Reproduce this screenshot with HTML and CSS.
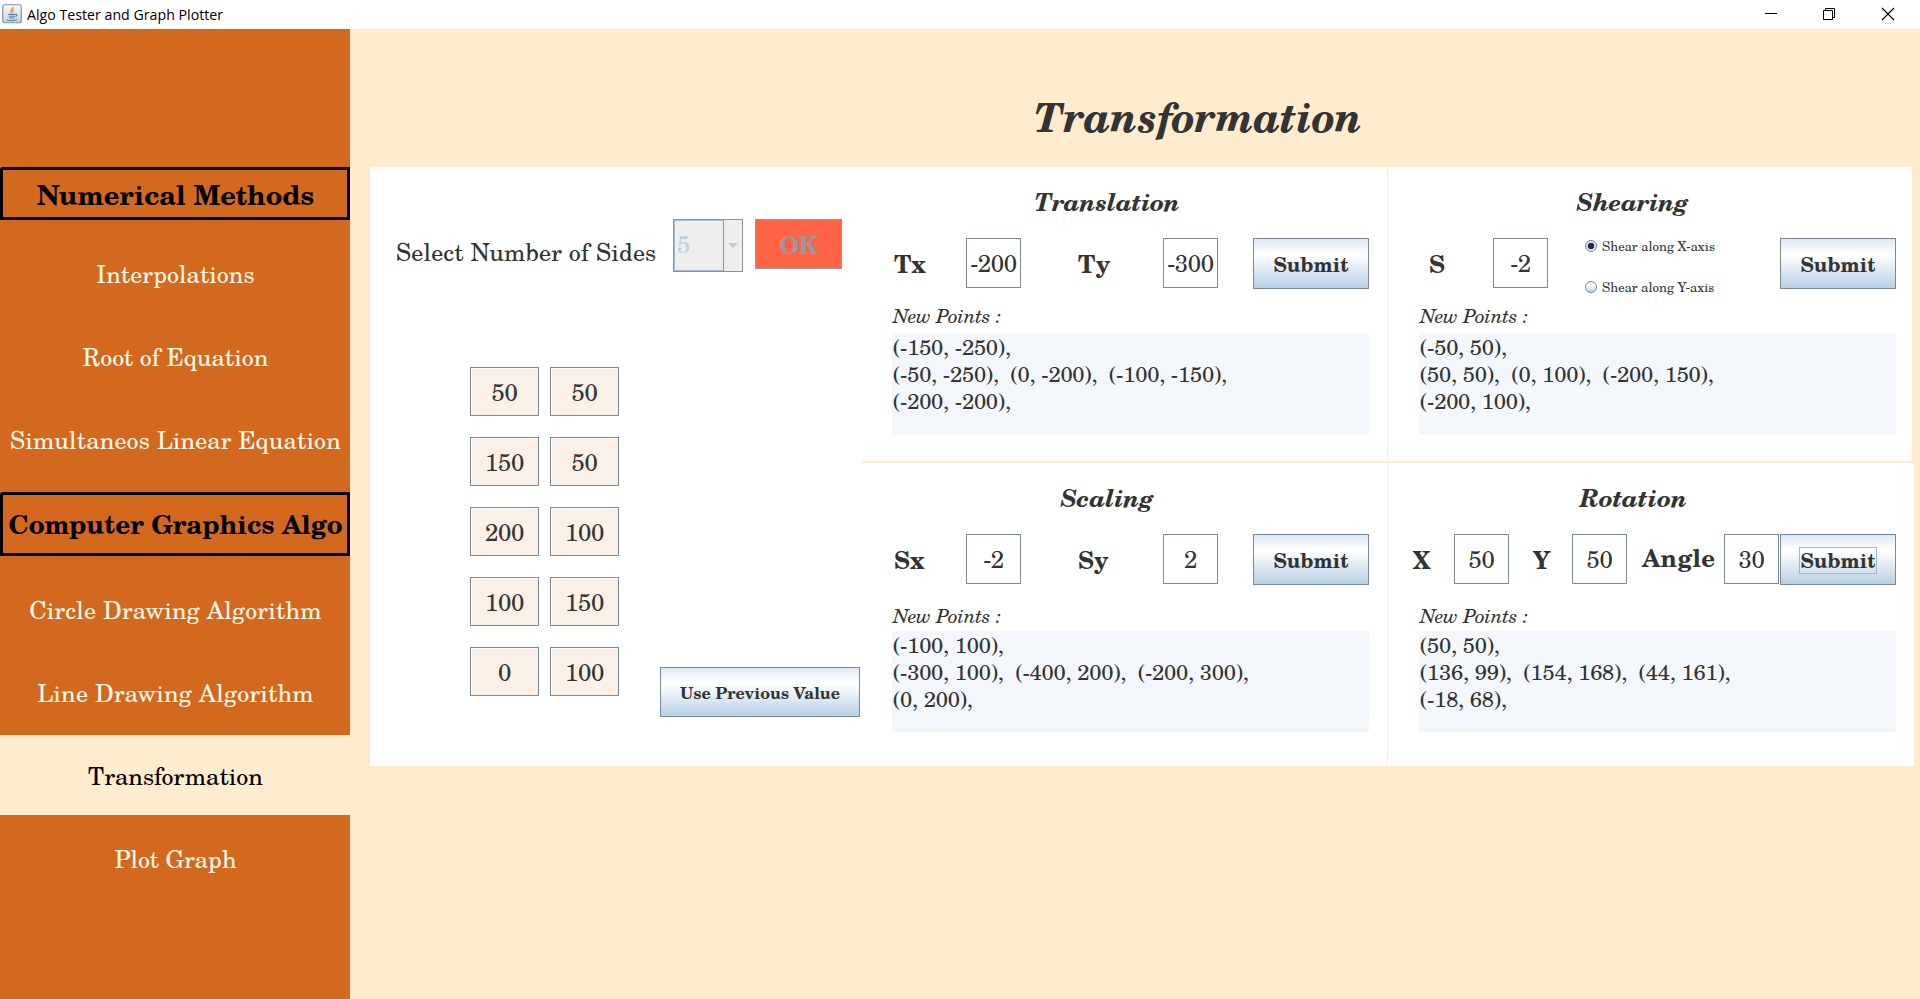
FILE: index.html
```html
<!DOCTYPE html>
<html lang="en">
<head>
<meta charset="utf-8">
<title>Algo Tester and Graph Plotter</title>
<link rel="stylesheet" href="styles.css">
</head>
<body>
<header class="titlebar">
  <svg class="app-icon" width="20" height="20" viewBox="0 0 20 20">
    <defs><linearGradient id="tile" x1="0" y1="0" x2="0" y2="1"><stop offset="0" stop-color="#fafbfc"/><stop offset="1" stop-color="#c3d3e0"/></linearGradient></defs>
    <rect x=".75" y=".75" width="18.5" height="18" rx="2" fill="url(#tile)" stroke="#7f93a3" stroke-width="1.2"/>
    <path d="M10.6 3c1.2 1.900-2.600 2.900-1.700 4.600.3.600.8.900.9 1.600M12.400 5.600c-1.500.7-2 1.300-1.200 2.500" fill="none" stroke="#e08a3c" stroke-width="1.300"/>
    <path d="M6.300 10.400h6.800M6.800 12.300h6M7.300 14h5M4.800 15.900c2 .9 8.400.9 10.400-.3M13.200 10.300c2.200-.5 2.300 1.600.1 2.200" fill="none" stroke="#5b80a5" stroke-width="1.100"/>
  </svg>
  <span class="app-title">Algo Tester and Graph Plotter</span>
  <svg class="win-controls" width="132" height="14" viewBox="0 0 132 14" fill="none" stroke="#000" stroke-width="1">
    <path d="M1 6.500h12M59.500 3.500h9v9h-9zM61.500 3.500v-2h9v9h-2"/>
    <path d="M118 1l12 12M130 1l-12 12" stroke-width="1.100"/>
  </svg>
</header>
<div class="window">
  <nav class="sidebar">
    <div class="group group-numerical">Numerical Methods</div>
    <a class="item">Interpolations</a>
    <a class="item">Root of Equation</a>
    <a class="item wide">Simultaneos Linear Equation</a>
    <div class="group group-graphics">Computer Graphics Algo</div>
    <a class="item wider">Circle Drawing Algorithm</a>
    <a class="item wider">Line Drawing Algorithm</a>
    <a class="item active">Transformation</a>
    <a class="item">Plot Graph</a>
  </nav>
  <main class="content">
    <h1 class="page-title">Transformation</h1>
    <div class="board">
      <section class="shape">
        <div class="sides">
          <span class="sides-label">Select Number of Sides</span>
          <div class="combo"><span class="combo-value">5</span><span class="combo-arrow"></span></div>
          <button class="ok" disabled>OK</button>
        </div>
        <div class="vertices">
          <div class="points">
            <span class="field">50</span><span class="field">50</span>
            <span class="field">150</span><span class="field">50</span>
            <span class="field">200</span><span class="field">100</span>
            <span class="field">100</span><span class="field">150</span>
            <span class="field">0</span><span class="field">100</span>
          </div>
          <button class="btn previous">Use Previous Value</button>
        </div>
      </section>
      <section class="panel translation">
        <h2>Translation</h2>
        <div class="controls">
          <span class="label first">Tx</span><span class="field">-200</span>
          <span class="label second">Ty</span><span class="field">-300</span>
          <button class="btn submit">Submit</button>
        </div>
        <div class="caption">New Points :</div>
        <pre class="result">(-150, -250),
(-50, -250),  (0, -200),  (-100, -150),
(-200, -200),</pre>
      </section>
      <section class="panel right shearing">
        <h2>Shearing</h2>
        <div class="controls">
          <span class="label shear">S</span><span class="field">-2</span>
          <div class="radios">
            <div class="radio"><i class="dot on"></i>Shear along X-axis</div>
            <div class="radio"><i class="dot"></i>Shear along Y-axis</div>
          </div>
          <button class="btn submit">Submit</button>
        </div>
        <div class="caption">New Points :</div>
        <pre class="result">(-50, 50),
(50, 50),  (0, 100),  (-200, 150),
(-200, 100),</pre>
      </section>
      <section class="panel lower scaling">
        <h2>Scaling</h2>
        <div class="controls">
          <span class="label first">Sx</span><span class="field">-2</span>
          <span class="label second">Sy</span><span class="field">2</span>
          <button class="btn submit">Submit</button>
        </div>
        <div class="caption">New Points :</div>
        <pre class="result">(-100, 100),
(-300, 100),  (-400, 200),  (-200, 300),
(0, 200),</pre>
      </section>
      <section class="panel right lower rotation">
        <h2>Rotation</h2>
        <div class="controls">
          <span class="label rx">X</span><span class="field">50</span>
          <span class="label ry">Y</span><span class="field">50</span>
          <span class="label angle">Angle</span><span class="field">30</span>
          <button class="btn submit"><span class="focus">Submit</span></button>
        </div>
        <div class="caption">New Points :</div>
        <pre class="result">(50, 50),
(136, 99),  (154, 168),  (44, 161),
(-18, 68),</pre>
      </section>
    </div>
  </main>
</div>
</body>
</html>
```
FILE: styles.css
```css
* { box-sizing: border-box; }

body {
  margin: 0;
  height: 999px;
  overflow: hidden;
  display: flex;
  flex-direction: column;
  background: #ffebcd;
  color: #333;
  font: 24px "TeX Gyre Schola", "Century Schoolbook", "Liberation Serif", serif;
  white-space: nowrap;
}

.titlebar {
  height: 29px;
  flex: none;
  display: flex;
  align-items: center;
  padding: 0 24px 0 2px;
  background: #fff;
  color: #000;
}
.app-icon { display: block; margin-top: -2px; }
.app-title { margin-left: 5px; font: 14.2px/28px "Open Sans", sans-serif; }
.win-controls { display: block; margin: -1px 0 0 auto; }

.window { flex: 1; display: flex; }

.sidebar {
  width: 350px;
  flex: none;
  display: flex;
  flex-direction: column;
  padding-top: 138px;
  background: #d2691e;
}
.group {
  display: flex;
  align-items: center;
  justify-content: center;
  border: 3px solid #000;
  border-radius: 3px 0 0 0;
  padding-left: 1px;
  color: #000;
  font-weight: bold;
}
.group-numerical { height: 53px; margin-bottom: 13px; font-size: 27.300px; }
.group-graphics { height: 64px; margin: 13px 0 13px; font-size: 26px; }
.item {
  height: 80px;
  display: flex;
  align-items: center;
  justify-content: center;
  padding-left: 1px;
  color: #fff8e8;
}
.item + .item { margin-top: 3px; }
.wide { letter-spacing: .09px; }
.wider { letter-spacing: .2px; }
.active { background: #ffebcd; color: #000; }

.content { flex: 1; }
.page-title {
  height: 138px;
  margin: 0;
  padding: 38px 0 0 126px;
  font: italic bold 40px/100px "TeX Gyre Schola", "Century Schoolbook", "Liberation Serif", serif;
  text-align: center;
}

.board {
  display: grid;
  grid-template-columns: 492px 525px 527px;
  grid-template-rows: 294px 303px;
  row-gap: 2px;
  margin-left: 20px;
  width: 1544px;
}
.shape { grid-row: 1 / 3; background: #fff; }

.sides { display: flex; align-items: flex-start; padding: 52px 0 0 26px; }
.sides-label { width: 277px; line-height: 66px; letter-spacing: .16px; }
.combo {
  width: 70px;
  height: 53px;
  display: flex;
  border: 1px solid #8a949e;
  background: #eee;
}
.combo-value {
  width: 50px;
  border: 1px solid #a9bdd2;
  border-right: 1px solid #8296aa;
  padding-left: 2px;
  line-height: 46px;
  color: #b8cfe5;
}
.combo-arrow { flex: 1; display: flex; align-items: center; justify-content: center; }
.combo-arrow::before {
  content: "";
  border: 5px solid transparent;
  border-top-color: #b8cfe5;
  border-bottom: 0;
}
.ok {
  width: 87px;
  height: 50px;
  margin-left: 12px;
  padding: 0;
  border: 1px solid #999;
  background: #ff6347;
  color: #999;
  font: bold 24px "TeX Gyre Schola", "Century Schoolbook", "Liberation Serif", serif;
  letter-spacing: -.8px;
}

.vertices { display: flex; height: 350px; margin: 82px 0 0 100px; }
.points {
  display: grid;
  grid-template-columns: 69px 69px;
  grid-auto-rows: 49px;
  gap: 21px 11px;
}
.field {
  width: 55px;
  height: 50px;
  display: flex;
  align-items: center;
  justify-content: center;
  padding-bottom: 1px;
  border: 1px solid #7a8a99;
  box-shadow: inset 1px 1px #fff;
  letter-spacing: -.4px;
}
.points .field { width: 69px; height: 49px; padding: 0; background: #faf0e6; }

.btn {
  padding: 0;
  border: 1px solid #7a8a99;
  background: linear-gradient(#dde8f3, #fff 30%, #fff 33%, #b8cfe5);
  color: #333;
  font-family: inherit;
  font-weight: bold;
  white-space: nowrap;
}
.previous { width: 200px; height: 50px; margin-left: 41px; align-self: flex-end; font-size: 16px; }
.submit { width: 116px; height: 51px; margin-left: auto; font-size: 20px; }
.focus { display: inline-block; height: 27px; line-height: 25px; border: 1px solid #a3b8cc; }

.panel { padding: 13px 18px 0 30px; background: #fff; }
.right { border-left: 1px solid #faefd2; padding-left: 31px; }
.shearing { margin-right: 2px; padding-right: 16px; }
.panel h2 {
  margin: 0 0 14px;
  padding-right: 47px;
  text-align: center;
  font-size: 24px;
  line-height: 44px;
  font-style: italic;
  letter-spacing: -.3px;
}
.right h2 { padding-right: 50px; }
.rotation h2 { letter-spacing: 0; padding-right: 48px; }
.controls { display: flex; height: 51px; align-items: flex-start; }
.label { font-weight: bold; line-height: 51px; }
.first { width: 74px; padding-left: 2px; }
.second { width: 142px; padding-left: 57px; }
.shear { width: 74px; padding-left: 10px; }
.rotation .controls { margin-left: -8px; }
.rx { width: 43px; padding-left: 2px; }
.ry { width: 63px; padding-left: 24px; }
.angle { width: 97px; padding-left: 15px; line-height: 48px; letter-spacing: .4px; }

.radios { display: flex; flex-direction: column; gap: 25px; margin-left: 37px; font-size: 13px; }
.radio { display: flex; align-items: center; height: 16px; line-height: 16px; }
.dot {
  width: 12px;
  height: 12px;
  margin-right: 5px;
  border: 1px solid #7a8a99;
  border-radius: 50%;
  background: linear-gradient(#e4edf6, #fff 35%, #b8cfe5);
}
.dot.on { background: radial-gradient(circle, #26303c 0 3px, #dde8f3 3.600px); }

.caption { margin: 11px 0 3px; padding-left: 1px; font-size: 19.500px; font-style: italic; line-height: 30px; letter-spacing: -.3px; }
.lower .caption { margin: 15px 0 1px; }
.result {
  height: 101px;
  margin: 0;
  padding-left: 1px;
  background: #f3f7fc;
  font: 22px/27px "TeX Gyre Schola", "Century Schoolbook", "Liberation Serif", serif;
  letter-spacing: -.25px;
}
```
